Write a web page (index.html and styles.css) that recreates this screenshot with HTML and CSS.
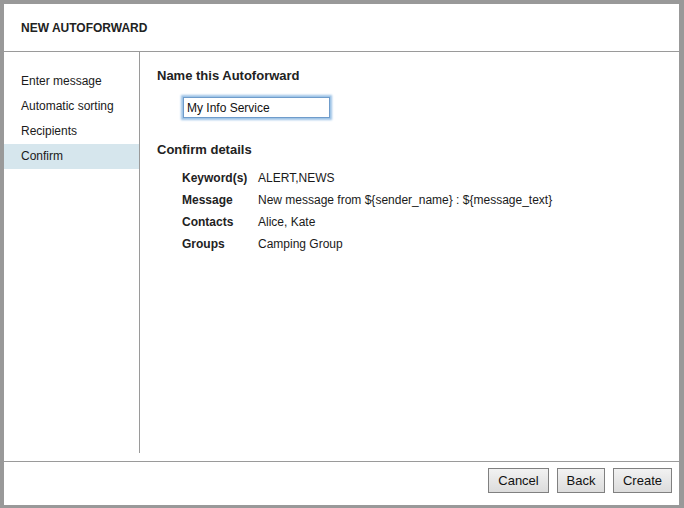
FILE: index.html
```html
<!DOCTYPE html>
<html>
<head>
<meta charset="utf-8">
<link rel="stylesheet" href="styles.css">
</head>
<body>
<div class="dialog">
  <div class="header">NEW AUTOFORWARD</div>
  <div class="body">
    <ul class="steps">
      <li>Enter message</li>
      <li>Automatic sorting</li>
      <li>Recipients</li>
      <li class="active">Confirm</li>
    </ul>
    <div class="main">
      <h2 class="section-title">Name this Autoforward</h2>
      <div class="field"><input class="name-input" type="text" value="My Info Service"></div>
      <h2 class="section-title confirm-title">Confirm details</h2>
      <table class="details">
        <tr><th>Keyword(s)</th><td>ALERT,NEWS</td></tr>
        <tr><th>Message</th><td>New message from ${sender_name} : ${message_text}</td></tr>
        <tr><th>Contacts</th><td>Alice, Kate</td></tr>
        <tr><th>Groups</th><td>Camping Group</td></tr>
      </table>
    </div>
  </div>
  <div class="footer">
    <button class="btn btn-cancel">Cancel</button>
    <button class="btn btn-back">Back</button>
    <button class="btn btn-create">Create</button>
  </div>
</div>
</body>
</html>
```
FILE: styles.css
```css
html, body {
  margin: 0;
  padding: 0;
}
body {
  background: #999999;
  width: 684px;
  height: 508px;
  overflow: hidden;
  font-family: "Liberation Sans", Arial, sans-serif;
  color: #1a1a1a;
}
.dialog {
  margin: 4px 0 0 4px;
  width: 675px;
  height: 501px;
  background: #ffffff;
  display: flex;
  flex-direction: column;
}
.header {
  box-sizing: border-box;
  border-bottom: 1px solid #9a9a9a;
  height: 48px;
  padding: 17px 0 0 17px;
  font-size: 12px;
  font-weight: bold;
  line-height: 14px;
  color: #222;
}
.body {
  flex: 1;
  display: flex;
  padding-bottom: 8px;
  min-height: 0;
}
.steps {
  list-style: none;
  margin: 0;
  padding: 17px 0 0 0;
  width: 135px;
  border-right: 1px solid #9a9a9a;
  font-size: 12px;
}
.steps li {
  height: 25px;
  line-height: 25px;
  padding-left: 17px;
}
.steps li.active {
  background: #d6e6ed;
}
.main {
  flex: 1;
  padding: 16px 0 0 17px;
}
.section-title {
  margin: 0;
  font-size: 13px;
  font-weight: bold;
  line-height: 16px;
  color: #222;
}
.field {
  padding: 13px 0 0 26px;
}
.name-input {
  box-sizing: border-box;
  width: 147px;
  height: 21px;
  margin: 0;
  padding: 0 0 0 3px;
  border: 1px solid #6f9ccb;
  box-shadow: 0 0 2px 2px #9cc2e6;
  font-family: "Liberation Sans", Arial, sans-serif;
  font-size: 12px;
  color: #111;
  outline: none;
}
.confirm-title {
  margin-top: 24px;
}
.details {
  border-collapse: collapse;
  margin: 9px 0 0 25px;
  font-size: 12px;
}
.details th {
  text-align: left;
  font-weight: bold;
  padding: 0 10px 0 0;
  width: 66px;
  height: 22px;
  color: #222;
}
.details td {
  padding: 0;
  height: 22px;
}
.footer {
  height: 44px;
  box-sizing: border-box;
  border-top: 1px solid #9a9a9a;
  display: flex;
  justify-content: flex-end;
  gap: 8px;
  padding: 6px 7px 0 0;
}
.btn {
  height: 25px;
  margin: 0;
  padding: 0;
  border: 1px solid #808080;
  background: linear-gradient(#f2f2f2, #dcdcdc);
  font-family: "Liberation Sans", Arial, sans-serif;
  font-size: 13px;
  color: #111;
}
.btn-cancel { width: 61px; }
.btn-back { width: 48px; }
.btn-create { width: 59px; }
```
